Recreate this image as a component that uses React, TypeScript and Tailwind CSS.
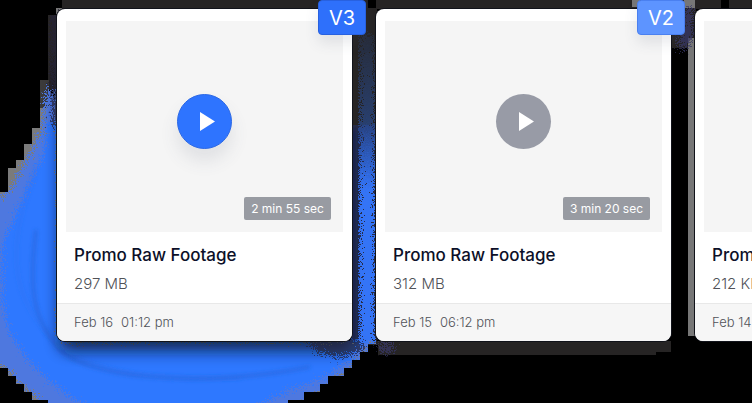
type Tone = "current" | "previous";

interface Version {
  id: string;
  tag?: string;
  size: string;
  date: string;
  time?: string;
  duration?: string;
  tone: Tone;
}

const versions: Version[] = [
  { id: "v3", tag: "V3", size: "297 MB", date: "Feb 16", time: "01:12 pm", duration: "2 min 55 sec", tone: "current" },
  { id: "v2", tag: "V2", size: "312 MB", date: "Feb 15", time: "06:12 pm", duration: "3 min 20 sec", tone: "previous" },
  { id: "v1", size: "212 KB", date: "Feb 14", tone: "previous" },
];

const badgeTone: Record<Tone, string> = {
  current: "bg-[#2e70fb] border-[#2861e0]",
  previous: "bg-[#5d94ff] border-[#4a80f0]",
};

const playTone: Record<Tone, string> = {
  current: "bg-[#2e74ff] border border-[#2b68e6] shadow-[0_12px_18px_rgba(70,85,110,0.12)]",
  previous: "bg-[#989ba6]",
};

/* Grainy brush stroke and soft shadows that sit behind the cards. */
function Backdrop() {
  return (
    <svg className="absolute top-0 left-0" width="752" height="403" viewBox="0 0 752 403" aria-hidden="true">
      <defs>
        <filter id="grain" x="-5%" y="-5%" width="110%" height="110%" colorInterpolationFilters="sRGB">
          <feTurbulence type="fractalNoise" baseFrequency="0.9" numOctaves="2" seed="4" result="n" />
          <feDisplacementMap in="SourceGraphic" in2="n" scale="24" xChannelSelector="R" yChannelSelector="G" />
        </filter>
        <filter id="soft" x="-20%" y="-20%" width="140%" height="140%">
          <feGaussianBlur stdDeviation="8" />
        </filter>
        <filter id="smudge" filterUnits="userSpaceOnUse" x="0" y="0" width="752" height="403">
          <feGaussianBlur stdDeviation="2" />
        </filter>
        <linearGradient id="gap" x1="0" y1="0" x2="0" y2="1">
          <stop offset="0" stopColor="#2e74ff" stopOpacity="0.1" />
          <stop offset="0.3" stopColor="#2e74ff" stopOpacity="0.35" />
          <stop offset="0.5" stopColor="#3474f6" stopOpacity="1" />
        </linearGradient>
        <clipPath id="steps">
          <path d="M40 80H48V15H57V8H376V344H368V352H360V360H352V368H344V376H328V384H320V392H304V400H288V403H48V400H32V392H24V384H16V376H8V368H0V192H8V168H16V160H24V144H32V128H40Z" />
        </clipPath>
      </defs>

      <path fill="#262424" d="M62 0H752V9H62ZM48 15H58V90H48ZM352 9H377V341H352ZM368 341H671V355H368Z" />
      <path fill="#262424" d="M671 9H696V48H671Z" />
      <path fill="#000" d="M680 48H688V341H680ZM671 56H680V64H671ZM721 0H729V9H721ZM368 0H376V8H368ZM656 352H672V356H656ZM368 345H378V356H368Z" />
      <path fill="#777" d="M688 38H695V336H688ZM684 0H695V8H684ZM632 0H640V7H632ZM56 8H62V14H56Z" />
      <path fill="#000" d="M671 97H680V104H671ZM671 112H680V127H671ZM671 136H680V143H671ZM671 152H680V175H671ZM671 186H680V200H671ZM671 216H680V272H671ZM671 280H680V304H671ZM671 320H680V341H671Z" />

      <g clipPath="url(#steps)">
        <path fill="#7b7b7b" d="M40 104H58V341H376V403H0V192H8V168H16V160H24V144H32V128H40Z" />
        <path fill="#3c3b3b" d="M40 80H49V108H40Z" />
        <path
          fill="#4e78df"
          filter="url(#grain)"
          d="M60 90H46L41 132L30 154L20 172L10 190L-16 208V355L8 370L20 384L36 396L48 415H286L304 400L326 388L346 373L364 356L378 334V110H352V340H60Z"
        />
        <path
          fill="#2e78ff"
          filter="url(#grain)"
          d="M60 120H49L43 155L28 188L16 214L2 246V300L10 333L26 357L48 380L76 400L110 415H242L284 392L324 378L350 360L370 338V120H352V340H60Z"
        />
        <path d="M38 165C12 230 5 280 42 328S150 378 242 378" fill="none" stroke="#2c6de9" strokeWidth="1" filter="url(#smudge)" />
        <path d="M36 230C28 290 34 320 58 348S190 390 310 367" fill="none" stroke="#2560d2" strokeWidth="2" filter="url(#smudge)" />
        <rect x="60" y="60" width="292" height="290" rx="8" fill="#10172c" opacity="0.85" filter="url(#soft)" />
        <path fill="#262438" opacity="0.7" filter="url(#grain)" d="M306 340H364V350L340 358L318 352ZM50 10H62V126H52Z" />
        <rect x="352" y="35" width="24" height="304" fill="#262c48" />
        <rect x="352" y="35" width="24" height="90" fill="#262424" />
        <rect x="359" y="35" width="16" height="308" fill="url(#gap)" filter="url(#grain)" />
        <path d="M354 130V341" stroke="#142350" strokeWidth="4" filter="url(#smudge)" />
      </g>
      <path fill="#393969" filter="url(#grain)" opacity="0.7" d="M685 8H693V38L684 52L678 46ZM378 342H390L396 349L386 354L379 349Z" />
    </svg>
  );
}

function PlayButton({ tone, label }: { tone: Tone; label: string }) {
  return (
    <button type="button" aria-label={label} className={`flex size-[55px] items-center justify-center rounded-full ${playTone[tone]}`}>
      <svg viewBox="0 0 55 55" className="size-[55px] shrink-0" aria-hidden="true">
        <path d="M23 18V37L38 27.5Z" fill="white" />
      </svg>
    </button>
  );
}

function VersionCard({ version }: { version: Version }) {
  return (
    <article className="relative w-[295px] shrink-0 rounded-lg bg-white ring-1 ring-[#11131a]">
      <div className="px-[9px] pt-3">
        <div className="relative flex h-[211px] items-center justify-center bg-[#f5f5f5] pb-[10px]">
          <PlayButton tone={version.tone} label="Play video" />
          {version.duration && (
            <span className="absolute right-3 bottom-3 flex h-[23px] w-[87px] items-center justify-center rounded-xs bg-[#989ba2] text-xs whitespace-nowrap text-white">
              {version.duration}
            </span>
          )}
        </div>
      </div>
      <div className="px-[17px] pt-[11px] pb-[7px]">
        <h2 className="text-[17px] leading-6 font-medium whitespace-nowrap text-[#0c1028]">Promo Raw Footage</h2>
        <p className="pt-[5px] text-[15px] leading-6 font-light text-[#505258]">{version.size}</p>
      </div>
      <footer className="flex h-[38px] items-center gap-2 rounded-b-lg border-t border-[#e8e8e8] bg-[#f6f6f6] px-[17px] text-[13px] font-light text-[#505258]">
        <span>{version.date}</span>
        {version.time && <span>{version.time}</span>}
      </footer>
      {version.tag && (
        <span
          className={`absolute -top-[9px] -right-[14px] flex h-[35px] w-12 items-center justify-center rounded-sm border text-xl text-white shadow-[0_8px_14px_rgba(70,85,110,0.12)] ${badgeTone[version.tone]}`}
        >
          {version.tag}
        </span>
      )}
    </article>
  );
}

export default function App() {
  return (
    <main className="relative min-h-screen overflow-hidden bg-black font-['Inter',sans-serif]">
      <Backdrop />
      <div className="relative flex items-start gap-6 pt-[9px] pl-[57px]">
        {versions.map((version) => (
          <VersionCard key={version.id} version={version} />
        ))}
      </div>
    </main>
  );
}
